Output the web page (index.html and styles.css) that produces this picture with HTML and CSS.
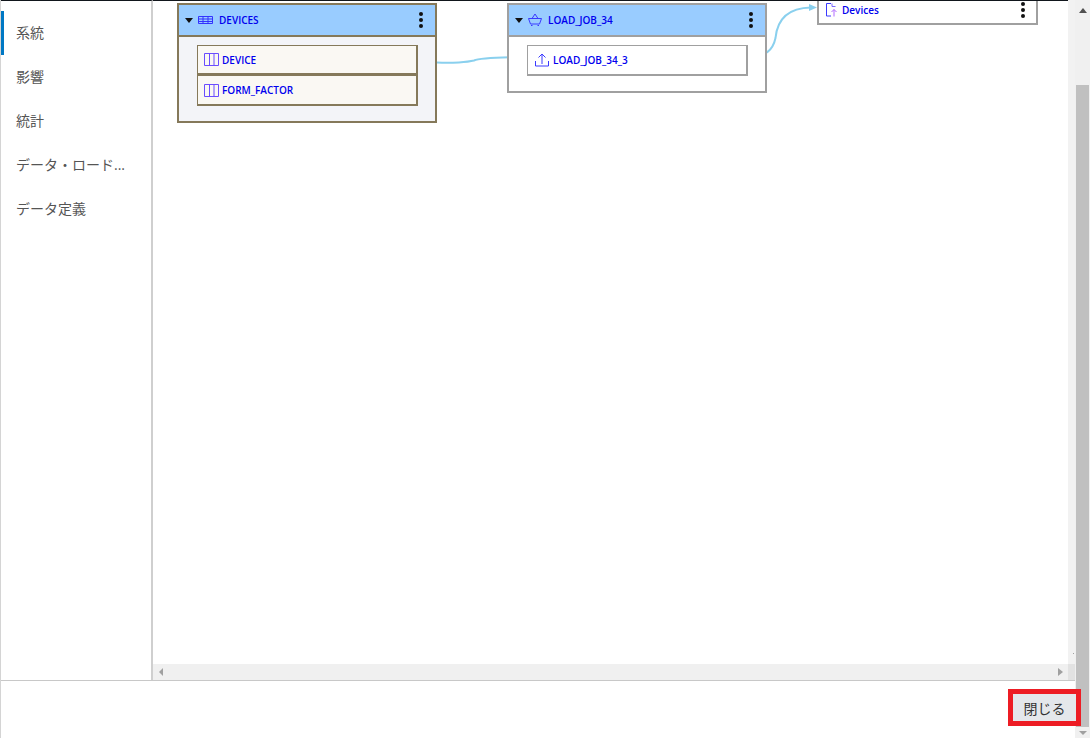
FILE: index.html
```html
<!DOCTYPE html>
<html lang="ja">
<head>
<meta charset="utf-8">
<title>系統</title>
<link rel="stylesheet" href="styles.css">
</head>
<body>
<div class="app">
  <div class="main">
    <div class="content">
      <nav class="sidebar">
        <div class="tab active">系統</div>
        <div class="tab">影響</div>
        <div class="tab">統計</div>
        <div class="tab">データ・ロード...</div>
        <div class="tab">データ定義</div>
      </nav>
      <div class="pane">
        <div class="pane-top">
          <div class="canvas">
            <svg class="edges" width="915" height="663" viewBox="153 1 915 663" fill="none">
              <path class="edge" d="M437 62.5C452 63.5 468 62 474 60.5C480 57.5 500 57.5 520 57"/>
              <path class="edge-head" d="M526 57L518 53.5V60.5Z"/>
              <path class="edge" d="M748 57.5C766 56.5 773 50 775.500 38C777 22 786 8 811 7.500"/>
              <path class="edge-head" d="M817 7.500L809 4V11Z"/>
            </svg>

            <section class="node node-devices">
              <header class="node-head">
                <span class="caret"></span>
                <svg class="ico-table" width="15" height="10" viewBox="0 0 15 10" fill="none">
                  <path d="M.5 1.500H14.500V8.500H.5ZM.5 4H14.500M.5 6.500H14.500M5 1V9M10 1V9" stroke="#3333ff"/>
                </svg>
                <span class="node-title">DEVICES</span>
                <span class="kebab"><i></i><i></i><i></i></span>
              </header>
              <div class="node-body">
                <div class="row">
                  <svg width="15" height="13" viewBox="0 0 15 13" fill="none"><path d="M.5.500H14.500V12.500H.5ZM5.500 1V12M10 1V12" stroke="#6a4dff"/></svg>
                  <span>DEVICE</span>
                </div>
                <div class="row">
                  <svg width="15" height="13" viewBox="0 0 15 13" fill="none"><path d="M.5.500H14.500V12.500H.5ZM5.500 1V12M10 1V12" stroke="#6a4dff"/></svg>
                  <span>FORM_FACTOR</span>
                </div>
              </div>
            </section>

            <section class="node node-job">
              <header class="node-head">
                <span class="caret"></span>
                <svg class="ico-cart" width="14" height="14" viewBox="0 0 14 14" fill="none">
                  <path d="M.5 5.500H13.500L11.500 11H2.500ZM4 5.500L7 1L10 5.500M3 12.500H4.500M9.500 12.500H11" stroke="#3a3aff"/>
                </svg>
                <span class="node-title">LOAD_JOB_34</span>
                <span class="kebab"><i></i><i></i><i></i></span>
              </header>
              <div class="node-body">
                <div class="row">
                  <svg width="14" height="14" viewBox="0 0 14 14" fill="none"><path d="M.5 8V13H13.500V8M7 11V1M3.500 4.500L7 1L10.500 4.500" stroke="#3a3aff"/></svg>
                  <span>LOAD_JOB_34_3</span>
                </div>
              </div>
            </section>

            <section class="node node-file">
              <div class="file-row">
                <svg width="12" height="14" viewBox="0 0 12 14" fill="none">
                  <path d="M5 .5H.5V13H5" stroke="#3a3aff"/>
                  <path d="M6 .5V3.500H9.500" stroke="#7a6aff"/>
                  <path d="M8 13.500V6.500M5.500 9L8 6.500L10.500 9" stroke="#b26aff"/>
                </svg>
                <span class="node-title">Devices</span>
                <span class="kebab"><i></i><i></i><i></i></span>
              </div>
            </section>
          </div>
          <div class="hscroll">
            <span class="arrow-left"></span>
            <span class="arrow-right"></span>
          </div>
        </div>
        <div class="inner-track">
          <span class="track-dot"></span>
          <span class="track-corner"></span>
        </div>
      </div>
    </div>
    <footer class="footer">
      <button class="close" type="button">閉じる</button>
    </footer>
  </div>
  <div class="vscroll">
    <span class="arrow-up"></span>
    <span class="thumb"></span>
    <span class="arrow-down"></span>
  </div>
</div>
</body>
</html>
```

FILE: styles.css
```css
* { box-sizing: border-box; }
html, body { margin: 0; height: 100%; background: #fff; overflow: hidden; }
body { font-family: "Open Sans", "Noto Sans CJK JP", sans-serif; }

.app { display: flex; width: 1090px; height: 738px; }
.main { width: 1075px; display: flex; flex-direction: column; border-left: 1px solid #d4d4d4; }
.content { display: flex; height: 681px; border-bottom: 1px solid #c8c8c8; }

.sidebar {
  width: 152px;
  flex: none;
  padding-top: 10px;
  border-top: 1px solid #11161c;
  border-right: 2px solid #cfcfcf;
}
.tab {
  height: 44px;
  line-height: 44px;
  padding-left: 15px;
  font-size: 14px;
  color: #555;
  white-space: nowrap;
}
.tab.active { padding-left: 12px; border-left: 3px solid #0078c4; }

.pane { flex: 1; display: flex; min-width: 0; }
.pane-top { flex: 1; display: flex; flex-direction: column; min-width: 0; border-top: 1px solid #11161c; }
.canvas { position: relative; flex: 1; overflow: hidden; }
.edges { position: absolute; left: 0; top: 0; }
.edge { stroke: #8ad0ee; stroke-width: 2; }
.edge-head { fill: #8ad0ee; }

.node { position: absolute; width: 260px; border: 2px solid #a0a0a0; background: #fff; }
.node-devices { left: 24px; top: 2px; height: 120px; border-color: #85795a; background: #f3f4f8; }
.node-job { left: 354px; top: 2px; height: 90px; }
.node-file { left: 664px; top: -40px; width: 221px; height: 64px; display: flex; align-items: flex-end; }

.node-head {
  display: flex;
  align-items: center;
  height: 30px;
  padding-left: 6px;
  background: #99ccff;
}
.node-body { padding: 8px 18px; }
.node-head { box-sizing: content-box; border-bottom: 2px solid #a0a0a0; }
.node-devices .node-head { border-bottom-color: #85795a; }

.caret {
  width: 0; height: 0;
  margin-right: 5px;
  border-left: 4px solid transparent;
  border-right: 4px solid transparent;
  border-top: 5px solid #111;
}
.node-title { font-size: 10px; font-weight: 600; color: #0000ee; }
.ico-table, .ico-cart { flex: none; }
.node-head .node-title { margin-left: 6px; }
.kebab { display: flex; flex-direction: column; gap: 2px; margin-left: auto; margin-right: 12px; }
.kebab i { display: block; width: 4px; height: 4px; border-radius: 50%; background: #111; }

.row {
  display: flex;
  align-items: center;
  gap: 3px;
  width: 221px;
  height: 30px;
  padding-left: 6px;
  font-size: 10px;
  font-weight: 600;
  color: #0000ee;
  background: #faf8f3;
  border: 1px solid #85795a;
  border-right-width: 2px;
  border-bottom-width: 2px;
}
.row + .row { height: 31px; margin-top: 0; border-top-width: 1px; }
.node-job .row { height: 31px; padding-left: 7px; gap: 4px; background: #fff; border-color: #a0a0a0; }

.file-row { display: flex; align-items: center; gap: 4px; width: 100%; height: 20px; padding: 0 0 6px 7px; }
.file-row .kebab { margin-right: 11px; }

.hscroll {
  display: flex;
  align-items: center;
  justify-content: space-between;
  flex: none;
  height: 16px;
  padding: 0 5px 0 6px;
  background: #f0f0f0;
}
.arrow-left { width: 0; height: 0; border: 4px solid transparent; border-left: 0; border-right: 4px solid #a0a0a0; }
.arrow-right { width: 0; height: 0; border: 4px solid transparent; border-right: 0; border-left: 5px solid #a0a0a0; }

.inner-track { position: relative; width: 7px; flex: none; background: #f2f2f2; display: flex; flex-direction: column; justify-content: flex-end; }
.track-corner { display: block; height: 16px; background: #e2e2e2; }
.track-dot { position: absolute; left: 5px; bottom: 26px; width: 1px; height: 1px; background: #a0a0a0; }

.footer { flex: 1; display: flex; justify-content: flex-end; padding-top: 8px; }
.close {
  position: relative;
  z-index: 1;
  width: 73px;
  height: 37px;
  margin-right: -6px;
  padding: 0;
  font-family: "Open Sans", "Noto Sans CJK JP", sans-serif;
  font-size: 14px;
  color: #333;
  background: #e4e7eb;
  border: 5px solid #ed1c24;
}

.vscroll { width: 15px; flex: none; display: flex; flex-direction: column; align-items: center; background: #f0f0f0; }
.arrow-up { flex: none; width: 0; height: 0; margin: 8px 0 72px; border: 4px solid transparent; border-top: 0; border-bottom: 5px solid #505050; }
.thumb { flex: 1; width: 13px; background: #c0c0c0; }
.arrow-down { flex: none; width: 0; height: 0; margin: 4px 0 3px; border: 4px solid transparent; border-bottom: 0; border-top: 4px solid #a0a0a0; }
```
